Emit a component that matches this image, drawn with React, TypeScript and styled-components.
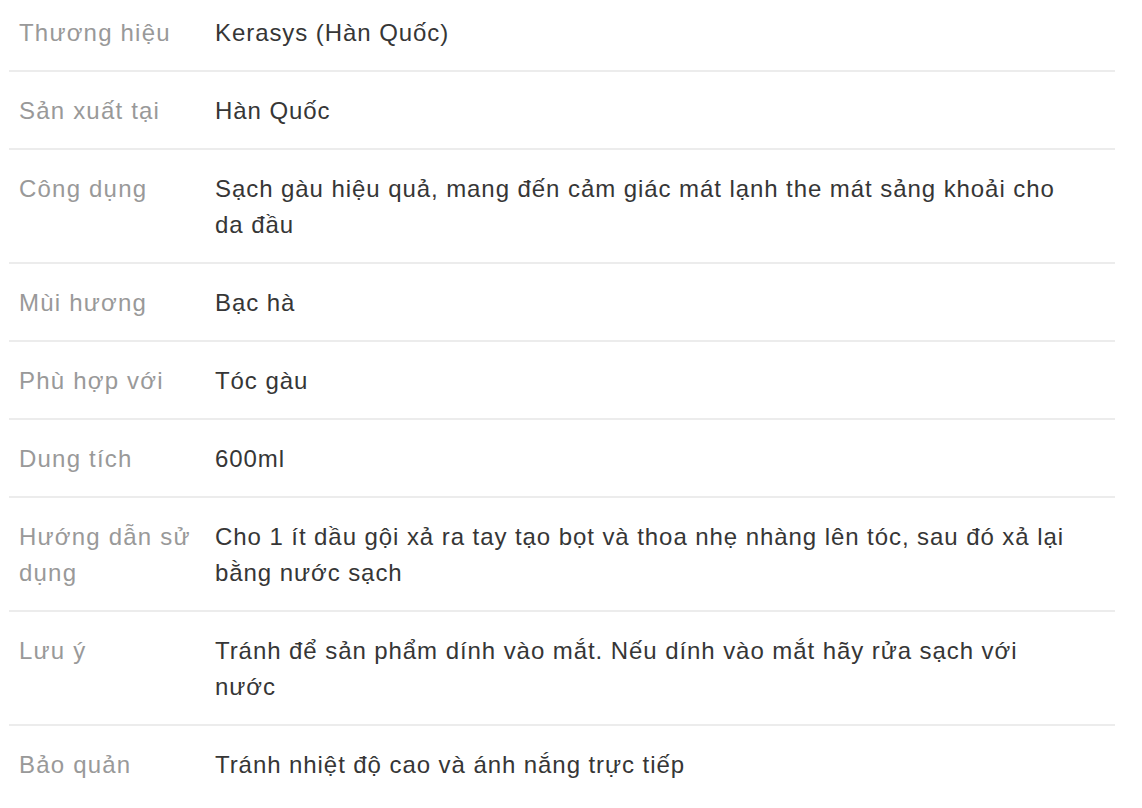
import React from "react";
import styled, { createGlobalStyle } from "styled-components";

const Global = createGlobalStyle`
  html, body { margin: 0; padding: 0; background: #ffffff; }
  body { font-family: "Liberation Sans", Helvetica, Arial, sans-serif; }
`;

const Table = styled.div`
  margin-left: 9px;
  width: 1106px;
  display: flex;
  flex-direction: column;
`;

const Row = styled.div`
  display: grid;
  grid-template-columns: 196px 1fr;
  border-bottom: 2px solid #ececec;
  &:last-child { border-bottom: none; }
  &:first-child > div { padding-top: 15px; }
`;

const Cell = styled.div<{ $label?: boolean }>`
  padding: 21px ${(p) => (p.$label ? "2px" : "40px")} 19px 10px;
  font-size: 24px;
  line-height: 36px;
  letter-spacing: ${(p) => (p.$label ? "1.2px" : "0.93px")};
  color: ${(p) => (p.$label ? "#999999" : "#363636")};
`;

const rows: [string, string][] = [
  ["Thương hiệu", "Kerasys (Hàn Quốc)"],
  ["Sản xuất tại", "Hàn Quốc"],
  ["Công dụng", "Sạch gàu hiệu quả, mang đến cảm giác mát lạnh the mát sảng khoải cho da đầu"],
  ["Mùi hương", "Bạc hà"],
  ["Phù hợp với", "Tóc gàu"],
  ["Dung tích", "600ml"],
  ["Hướng dẫn sử dụng", "Cho 1 ít dầu gội xả ra tay tạo bọt và thoa nhẹ nhàng lên tóc, sau đó xả lại bằng nước sạch"],
  ["Lưu ý", "Tránh để sản phẩm dính vào mắt. Nếu dính vào mắt hãy rửa sạch với nước"],
  ["Bảo quản", "Tránh nhiệt độ cao và ánh nắng trực tiếp"],
];

export default function App() {
  return (
    <>
      <Global />
      <Table>
        {rows.map(([k, v]) => (
          <Row key={k}>
            <Cell $label>{k}</Cell>
            <Cell>{v}</Cell>
          </Row>
        ))}
      </Table>
    </>
  );
}
